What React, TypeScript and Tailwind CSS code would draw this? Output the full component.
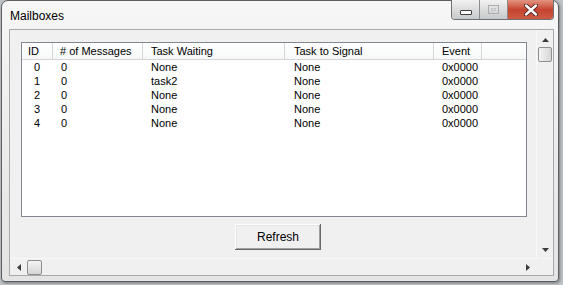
import React from 'react';

const COLUMNS = [
  { key: 'id', label: 'ID', w: 'w-[31px]', hp: 'pl-[6px]', cp: 'pl-[12px]' },
  { key: 'msgs', label: '# of Messages', w: 'w-[90px]', hp: 'pl-[7px]', cp: 'pl-[8px]' },
  { key: 'wait', label: 'Task Waiting', w: 'w-[142px]', hp: 'pl-[8px]', cp: 'pl-[8px]' },
  { key: 'signal', label: 'Task to Signal', w: 'w-[149px]', hp: 'pl-[9px]', cp: 'pl-[9px]' },
  { key: 'event', label: 'Event', w: 'w-[48px]', hp: 'pl-[8px]', cp: 'pl-[8px]' },
];

const ROWS = [
  { id: '0', msgs: '0', wait: 'None', signal: 'None', event: '0x0000' },
  { id: '1', msgs: '0', wait: 'task2', signal: 'None', event: '0x0000' },
  { id: '2', msgs: '0', wait: 'None', signal: 'None', event: '0x0000' },
  { id: '3', msgs: '0', wait: 'None', signal: 'None', event: '0x0000' },
  { id: '4', msgs: '0', wait: 'None', signal: 'None', event: '0x0000' },
];

function Arrow({ dir }: { dir: 'up' | 'down' | 'left' | 'right' }) {
  const pts = {
    up: '0,4 7,4 3.5,0',
    down: '0,0 7,0 3.5,4',
    left: '4,0 4,7 0,3.5',
    right: '0,0 0,7 4,3.5',
  }[dir];
  const vertical = dir === 'up' || dir === 'down';
  return (
    <svg width={vertical ? 7 : 4} height={vertical ? 4 : 7} viewBox={vertical ? '0 0 7 4' : '0 0 4 7'}>
      <polygon points={pts} fill="#3c3c3c" />
    </svg>
  );
}

function TitleButtons() {
  return (
    <div className="flex h-[20px] -mt-px rounded-b-[4px] border border-t-0 border-[#6e7074] overflow-hidden">
      <div className="w-[28px] flex items-end justify-center pb-[4px] bg-gradient-to-b from-[#f2f2f2] via-[#dcdcdc] to-[#c6c9cc] border-r border-[#8a8c90]">
        <div className="w-[12px] h-[5px] rounded-[1px] border border-[#3c3c3c] bg-white" />
      </div>
      <div className="w-[28px] flex items-center justify-center bg-gradient-to-b from-[#f2f2f2] via-[#dcdcdc] to-[#c6c9cc] border-r border-[#8a8c90]">
        <div className="w-[11px] h-[9px] border border-[#a9acb0] flex items-center justify-center">
          <div className="w-[5px] h-[3px] border border-[#c3c6ca]" />
        </div>
      </div>
      <div className="w-[45px] flex items-center justify-center bg-gradient-to-b from-[#e39382] via-[#c64430] to-[#cc5a42]">
        <svg width="14" height="12" viewBox="0 0 14 12">
          <path d="M2 1.5 L12 10.5 M12 1.5 L2 10.5" stroke="#4a1f18" strokeWidth="4.2" strokeLinecap="round" />
          <path d="M2 1.5 L12 10.5 M12 1.5 L2 10.5" stroke="#ffffff" strokeWidth="2.4" strokeLinecap="round" />
        </svg>
      </div>
    </div>
  );
}

function MailboxList() {
  return (
    <div className="w-[506px] h-[175px] border border-[#828790] bg-white flex flex-col">
      <div className="h-[17px] flex border-b border-[#d5d5d5] bg-gradient-to-b from-white to-[#f6f7f8]">
        {COLUMNS.map(c => (
          <div key={c.key} className={`${c.w} ${c.hp} h-full border-r border-[#d5d5d5] leading-[16px]`}>{c.label}</div>
        ))}
        <div className="flex-1" />
      </div>
      {ROWS.map(r => (
        <div key={r.id} className="h-[14px] flex leading-[14px]">
          {COLUMNS.map(c => (
            <div key={c.key} className={`${c.w} ${c.cp}`}>{r[c.key as keyof typeof r]}</div>
          ))}
        </div>
      ))}
    </div>
  );
}

export default function App() {
  return (
    <div className="w-[563px] h-[285px] bg-[#bfc3c6] overflow-hidden pl-px">
      <div className="w-[558px] h-[282px] rounded-t-[7px] rounded-b-[4px] border border-[#5d5f62] bg-gradient-to-b from-[#f7f7f7] via-[#ececec] to-[#e4e4e4] flex flex-col pl-[7px] pr-[4px] pb-[5px] shadow-[1px_1px_3px_rgba(0,0,0,0.4)]">
        <div className="h-[28px] flex items-start justify-between">
          <div className="pt-[6px] pl-px text-[12px] text-black font-['Liberation_Sans',Arial,sans-serif]">Mailboxes</div>
          <TitleButtons />
        </div>

        <div className="flex-1 border border-[#a7a9ac] bg-[#f0f0f0] flex flex-col text-[11px] text-black font-['Liberation_Sans',Arial,sans-serif]">
          <div className="h-[228px] flex">
            <div className="flex-1 pt-[12px] pl-[11px] flex flex-col">
              <MailboxList />
              <div className="mt-[7px] ml-[214px] w-[86px] h-[26px] bg-[#f0f0f0] flex items-center justify-center text-[12px] shadow-[inset_-1px_-1px_#696969,inset_1px_1px_#ffffff,inset_-2px_-2px_#a0a0a0,inset_2px_2px_#e3e3e3]">
                Refresh
              </div>
            </div>
            <div className="w-[17px] flex flex-col border-l border-[#f8f8f8] bg-[#f0f0f0]">
              <div className="h-[17px] flex items-center justify-center pt-[2px]"><Arrow dir="up" /></div>
              <div className="h-[15px] mx-px rounded-[2px] border border-[#8e8f91] bg-gradient-to-r from-[#f4f4f4] to-[#d6d6d6]" />
              <div className="flex-1" />
              <div className="h-[17px] flex items-center justify-center"><Arrow dir="down" /></div>
            </div>
          </div>
          <div className="h-[17px] flex border-t border-[#f8f8f8]">
            <div className="flex-1 flex items-center">
              <div className="w-[17px] flex justify-center"><Arrow dir="left" /></div>
              <div className="w-[15px] h-[15px] rounded-[2px] border border-[#8e8f91] bg-gradient-to-b from-[#f4f4f4] to-[#d6d6d6]" />
              <div className="flex-1" />
              <div className="w-[17px] flex justify-center"><Arrow dir="right" /></div>
            </div>
            <div className="w-[17px]" />
          </div>
        </div>
      </div>
    </div>
  );
}
